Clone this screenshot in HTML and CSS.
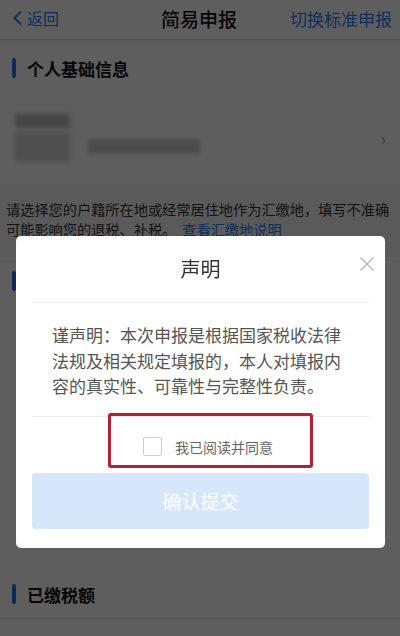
FILE: index.html
```html
<!DOCTYPE html>
<html lang="zh-CN">
<head>
<meta charset="utf-8">
<title>简易申报</title>
<link rel="stylesheet" href="styles.css">
</head>
<body>
<div class="page">
  <header class="nav">
    <div class="nav-back">
      <svg class="chev" width="12" height="16" viewBox="0 0 12 16"><path d="M9 1.5 L2.5 8 L9 14.5" fill="none" stroke="#2f7cf6" stroke-width="2"/></svg>
      <span>返回</span>
    </div>
    <div class="nav-title">简易申报</div>
    <div class="nav-right">切换标准申报</div>
  </header>

  <div class="section-title"><span class="bar"></span>个人基础信息</div>

  <div class="card">
    <div class="blur-col">
      <div class="blur b1"></div>
      <div class="blur b2"></div>
    </div>
    <div class="blur b3"></div>
    <span class="arrow">›</span>
  </div>

  <div class="note">
    <div class="note-line">请选择您的户籍所在地或经常居住地作为汇缴地，填写不准确</div>
    <div class="note-line"><span>可能影响您的退税、补税。</span><span class="link">查看汇缴地说明</span></div>
  </div>

  <div class="section-title second"><span class="bar"></span>汇缴地</div>
  <div class="card tall"></div>

  <div class="section-title"><span class="bar"></span>已缴税额</div>
  <div class="card short"></div>
</div>

<div class="mask">
  <div class="modal">
    <div class="modal-head">
      <span class="modal-title">声明</span>
      <svg class="close" width="16" height="16" viewBox="0 0 16 16"><path d="M1.5 1.5 L14.5 14.5 M14.5 1.5 L1.5 14.5" stroke="#b5b5b5" stroke-width="1.4" fill="none"/></svg>
    </div>
    <div class="modal-body">谨声明：本次申报是根据国家税收法律法规及相关规定填报的，本人对填报内容的真实性、可靠性与完整性负责。</div>
    <div class="agree">
      <span class="checkbox"></span>
      <span class="agree-text">我已阅读并同意</span>
    </div>
    <div class="submit">确认提交</div>
    <div class="highlight"></div>
  </div>
</div>
</body>
</html>
```

FILE: styles.css
```css
html, body {
  margin: 0;
  padding: 0;
}
body {
  width: 400px;
  height: 636px;
  overflow: hidden;
  background: #f4f4f4;
  font-family: "Noto Sans CJK SC", "Noto Sans", sans-serif;
  color: #222;
}
.page {
  display: flex;
  flex-direction: column;
}
.nav {
  height: 40px;
  background: #fff;
  border-bottom: 1px solid #e2e2e2;
  display: flex;
  align-items: center;
  justify-content: space-between;
  padding: 0 8px 3px 12px;
  box-sizing: border-box;
  margin-bottom: 4px;
}
.nav-back {
  display: flex;
  align-items: center;
  gap: 3px;
  color: #2f7cf6;
  font-size: 16px;
  width: 96px;
}
.nav-title {
  font-size: 19px;
  font-weight: 500;
  color: #111;
}
.nav-right {
  font-size: 17px;
  color: #2f7cf6;
  width: 102px;
  text-align: right;
  white-space: nowrap;
}
.section-title {
  height: 48px;
  background: #fff;
  display: flex;
  align-items: center;
  padding-left: 12px;
  font-size: 17px;
  font-weight: 700;
  color: #111;
}
.bar {
  width: 4px;
  height: 20px;
  background: #2f6ff0;
  border-radius: 2px;
  margin-right: 11px;
}
.card {
  height: 92px;
  background: #fff;
  display: flex;
  align-items: center;
  padding: 0 10px 0 15px;
  gap: 18px;
}
.blur-col {
  display: flex;
  flex-direction: column;
  gap: 4px;
}
.blur {
  background: #cfcfcf;
  filter: blur(2px);
}
.b1 { width: 55px; height: 14px; background: #bdbdbd; }
.b2 { width: 55px; height: 30px; background: #d6d6d6; }
.b3 { width: 112px; height: 15px; margin-top: 16px; }
.arrow {
  margin-left: auto;
  margin-right: 4px;
  color: #aaa;
  font-size: 18px;
}
.note {
  padding: 15px 6px 0 6px;
  font-size: 14.2px;
  line-height: 20px;
  color: #333;
}
.note-line {
  display: flex;
  white-space: nowrap;
}
.link {
  color: #2f7cf6;
  margin-left: 6px;
}
.section-title.second {
  margin-top: 18px;
}
.card.tall {
  height: 265px;
}
.card.short {
  height: 20px;
  border-top: 1px solid #e6e6e6;
}

.mask {
  position: fixed;
  inset: 0;
  background: rgba(0, 0, 0, 0.63);
  padding-top: 236px;
  box-sizing: border-box;
}
.modal {
  position: relative;
  width: 369px;
  margin-left: 16px;
  background: #fff;
  border-radius: 5px;
  padding: 0 16px 19px;
  box-sizing: border-box;
}
.modal-head {
  height: 66px;
  display: flex;
  align-items: center;
  justify-content: center;
  position: relative;
  border-bottom: 1px solid #ececec;
}
.modal-title {
  font-size: 20px;
  color: #333;
  margin-top: -2px;
}
.close {
  position: absolute;
  right: -6px;
  top: 20px;
}
.modal-body {
  padding: 19px 20px 17px;
  font-size: 17px;
  line-height: 25.5px;
  color: #555;
  border-bottom: 1px solid #ececec;
}
.agree {
  height: 56px;
  display: flex;
  align-items: center;
  justify-content: center;
  gap: 13px;
  padding-top: 4px;
  padding-left: 15px;
  box-sizing: border-box;
}
.checkbox {
  width: 17px;
  height: 17px;
  border: 1px solid #cfcfcf;
  border-radius: 2px;
}
.agree-text {
  font-size: 14px;
  color: #666;
}
.submit {
  height: 56px;
  background: #d6e6fb;
  border-radius: 4px;
  display: flex;
  align-items: center;
  justify-content: center;
  color: #fff;
  font-size: 19px;
}
.highlight {
  position: absolute;
  left: 92px;
  top: 177px;
  width: 205px;
  height: 55px;
  border: 3px solid #b3202e;
  border-radius: 3px;
  box-sizing: border-box;
}
```
